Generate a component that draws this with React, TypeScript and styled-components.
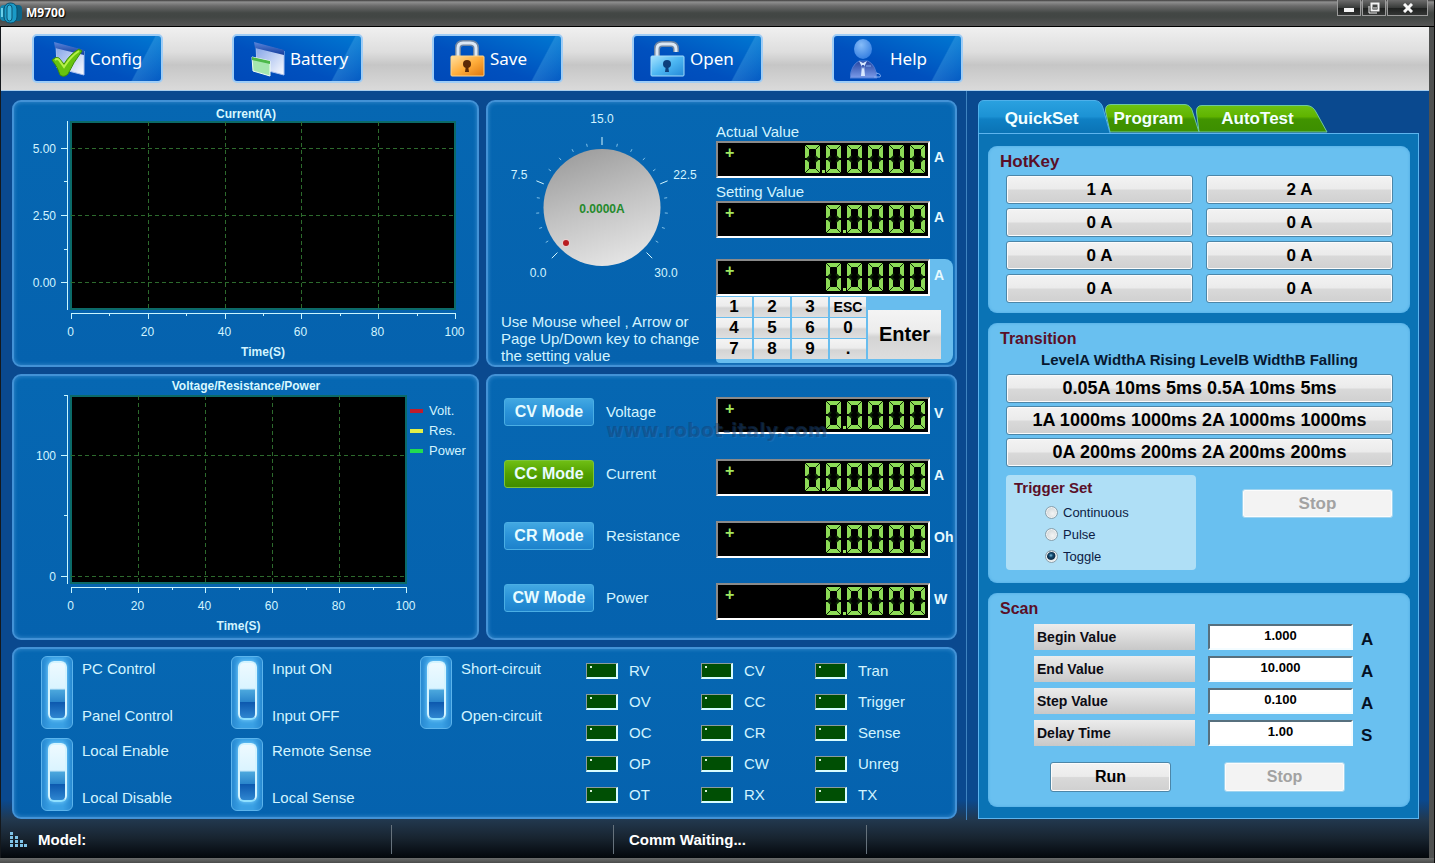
import React, { useState } from 'react';
import styled, { createGlobalStyle, css } from 'styled-components';

const SANS = '"Liberation Sans", Arial, sans-serif';
const UI = '"Noto Sans", "Open Sans", sans-serif';

const GlobalStyle = createGlobalStyle`
  *, *::before, *::after { box-sizing: border-box; }
  body { margin: 0; background: #4b4d4c; font-family: ${SANS}; }
  button, input, output { font-family: inherit; }
  button { cursor: pointer; padding: 0; }
  h1, h2, h3, p { margin: 0; }
`;

/* ---------- window frame ---------- */

const Window = styled.div`
  min-height: 100vh;
  display: flex;
  flex-direction: column;
  background: #4f5150;
  border-right: 1px solid #0a0a0a;
`;

const TitleBar = styled.header`
  display: flex;
  align-items: center;
  height: 27px;
  padding-right: 6px;
  border-bottom: 1px solid #000;
  background: linear-gradient(#3c3a3a 0, #8f8f8f 2px, #6a6a6a 6px, #434745 13px, #424644 17px, #555 26px);
`;

const AppTitle = styled.h1`
  flex: 1;
  margin-left: 4px;
  font: bold 12px/20px ${UI};
  color: #fff;
  text-shadow: 1px 1px 1px #000;
`;

const WindowButtons = styled.div`
  display: flex;
  align-self: flex-start;
  gap: 1px;
`;

const WindowButton = styled.button<{ $wide?: boolean }>`
  width: ${(p) => (p.$wide ? 41 : 24)}px;
  height: 16px;
  display: flex;
  align-items: center;
  justify-content: center;
  border: 1px solid #9b9b9b;
  border-top: 0;
  background: linear-gradient(#6c6c6c, #3a3c3b 50%, #1e201f 52%, #343635);
`;

const Client = styled.div`
  flex: 1;
  display: flex;
  flex-direction: column;
  margin: 0 5px 0 0;
  border-left: 1px solid #14181c;
  background:
    linear-gradient(to top, #03070b 0, #182430 20px, #22384e 38px, rgba(34, 56, 78, 0) 58px),
    #0a498f;
`;

const BottomFrame = styled.div`
  height: 5px;
  padding-left: 14px;
  overflow: hidden;
  background: linear-gradient(#6b6d6c, #4a4c4b);
`;

/* ---------- toolbar ---------- */

const Toolbar = styled.nav`
  display: flex;
  gap: 69px;
  height: 64px;
  padding: 7px 31px;
  border-bottom: 1px solid #a9cdec;
  background: linear-gradient(#f0f0f0, #dedede 25px, #c6c6c6 38px, #dadada);
`;

const ToolButton = styled.button`
  width: 131px;
  height: 49px;
  display: grid;
  grid-template-columns: 36px 1fr;
  align-items: center;
  gap: 4px;
  padding-left: 16px;
  border: 2px solid #9fcdf6;
  border-radius: 5px;
  color: #fff;
  font: 17px/24px ${UI};
  text-align: left;
  background:
    linear-gradient(118deg, rgba(80, 180, 240, 0) 80%, rgba(90, 180, 235, 0.3) 81%, rgba(80, 170, 230, 0.05)),
    linear-gradient(to top right, #0049b8, #0050be 40%, #0078d2);
`;

/* ---------- main layout ---------- */

const Main = styled.main`
  flex: 1;
  display: grid;
  grid-template-columns: minmax(0, 1fr) 463px;
`;

const Bench = styled.section`
  display: grid;
  grid-template-columns: 467fr 471fr;
  grid-template-rows: 267px 266px auto;
  gap: 7px;
  align-content: start;
  padding: 9px 9px 1px 11px;
`;

const Panel = styled.section<{ $span?: boolean }>`
  position: relative;
  min-width: 0;
  border: 2px solid #4392d6;
  border-radius: 9px;
  background: linear-gradient(#0667b2, #0562ae);
  box-shadow: inset 0 0 4px #3d8fd0;
  color: #d2f4ff;
  ${(p) => p.$span && css`grid-column: 1 / -1;`}
`;

const Drawing = styled.svg`
  display: block;
  width: 100%;
  height: auto;
  font-family: ${SANS};
  font-size: 12px;
`;

/* ---------- read-outs ---------- */

const DialPanel = styled(Panel)`
  display: grid;
  grid-template-columns: 228px 1fr;
`;

const DialSide = styled.div`
  display: flex;
  flex-direction: column;
`;

const Hint = styled.p`
  padding-left: 13px;
  font-size: 15px;
  line-height: 17px;
  white-space: pre;
`;

const ValueSide = styled.div`
  display: flex;
  flex-direction: column;
  padding-top: 21px;
`;

const ValueLabel = styled.h3`
  font-size: 15px;
  font-weight: normal;
  line-height: 18px;
`;

const ReadoutRow = styled.div<{ $after: number }>`
  display: flex;
  gap: 4px;
  margin-bottom: ${(p) => p.$after}px;
`;

const Readout = styled.output`
  flex: none;
  display: flex;
  justify-content: space-between;
  width: 214px;
  height: 37px;
  padding: 2px 3px 0 7px;
  border: 2px solid;
  border-color: #8a8a8a #fff #fff #8a8a8a;
  background: #000;
`;

const Plus = styled.span`
  color: #a2e65f;
  font: bold 16px/16px ${SANS};
`;

const Digits = styled.span`
  display: flex;
  gap: 6px;
`;

const Unit = styled.span`
  font-size: 14px;
  font-weight: bold;
  line-height: 32px;
  color: #e6faff;
`;

const Entry = styled.div`
  width: 237px;
  padding-bottom: 4px;
  border-radius: 4px 8px 8px 4px;
  background: #68bdee;
`;

const Keypad = styled.div`
  display: flex;
  align-items: flex-end;
  gap: 2px;
`;

const KeyGrid = styled.div`
  display: grid;
  grid-template-columns: repeat(4, 36px);
  grid-auto-rows: 20px;
  gap: 1px 2px;
`;

const keyFace = css`
  border: 0;
  color: #000;
  background: linear-gradient(#f4f4f4, #ececec 45%, #d4d4d4 55%, #dedede);
  font-weight: bold;
`;

const Key = styled.button<{ $small?: boolean }>`
  ${keyFace}
  font-size: ${(p) => (p.$small ? 14 : 17)}px;
  line-height: 20px;
`;

const EnterKey = styled.button`
  ${keyFace}
  width: 73px;
  height: 49px;
  font-size: 20px;
`;

/* ---------- modes ---------- */

const ModePanel = styled(Panel)`
  display: flex;
  flex-direction: column;
  gap: 25px;
  padding: 21px 0 0 16px;
`;

const ModeRow = styled.div`
  display: grid;
  grid-template-columns: 90px 98px auto 1fr;
  align-items: start;
  column-gap: 12px;
`;

const ModeButton = styled.button<{ $active: boolean }>`
  height: 28px;
  margin-top: 1px;
  border: 1px solid ${(p) => (p.$active ? '#7cc43a' : '#4aaee4')};
  border-radius: 3px;
  color: #e8fcff;
  font-size: 16px;
  font-weight: bold;
  background: ${(p) =>
    p.$active ? 'linear-gradient(#6fbe14, #52a000 50%, #3f8c00)' : 'linear-gradient(#42a8e2, #2a92d8 50%, #1d82cc)'};
`;

const ModeLabel = styled.span`
  font-size: 15px;
  line-height: 30px;
`;

const Watermark = styled.span`
  position: absolute;
  left: 118px;
  top: 42px;
  font: bold 19px/24px "DejaVu Sans", sans-serif;
  color: rgba(20, 60, 110, 0.45);
  text-shadow: 1px 1px 0 rgba(110, 170, 220, 0.12);
  pointer-events: none;
`;

/* ---------- switches and lamps ---------- */

const StatusPanel = styled(Panel)`
  display: grid;
  grid-template-columns: 545fr 369fr;
  padding: 7px 0 6px 27px;
`;

const Switches = styled.div`
  display: grid;
  grid-template-columns: 190fr 189fr 166fr;
  gap: 9px 0;
`;

const SwitchLabel = styled.label`
  display: flex;
  gap: 9px;
  height: 73px;
  font-size: 15px;
  line-height: 18px;
`;

const SwitchBox = styled.input`
  appearance: none;
  position: relative;
  width: 32px;
  height: 73px;
  margin: 0;
  border: 1px solid #5cb4ec;
  border-radius: 6px;
  background: linear-gradient(to right, #2789d2, #3aa0e4 30%, #3aa0e4 70%, #2789d2);

  &::before {
    content: '';
    position: absolute;
    inset: 4px 5px 8px 6px;
    border: 2px solid #d4f4ff;
    border-bottom-color: #8fe0ff;
    border-radius: 6px;
    background: linear-gradient(#eefaff, #daf4ff 46%, #4aa6dc 50%, #2b86cc 70%, #0c58ae 71%, #2f86d0);
    box-shadow: 0 0 4px #7fd4ff;
  }

  &:checked::before { transform: scaleY(-1); }
`;

const SwitchTexts = styled.span`
  display: flex;
  flex-direction: column;
  justify-content: space-between;
  padding: 4px 0;
`;

const Lamps = styled.ul`
  display: grid;
  grid-template-columns: 115fr 114fr 140fr;
  grid-template-rows: repeat(5, 16px);
  grid-auto-flow: column;
  gap: 15px 0;
  margin: 7px 0 0;
  padding: 0;
  list-style: none;
`;

const Lamp = styled.li`
  display: flex;
  align-items: center;
  gap: 11px;
  font-size: 15px;
  line-height: 16px;

  &::before {
    content: '';
    width: 32px;
    height: 16px;
    border: 2px solid;
    border-width: 1px 2px 2px 1px;
    border-color: #8c9c9c #d8fcff #d8fcff #8c9c9c;
    background: radial-gradient(circle at 4px 3px, #d8f0d8 1px, transparent 1px), #004f04;
  }
`;

/* ---------- set-up column ---------- */

const Setup = styled.aside`
  display: flex;
  flex-direction: column;
  padding: 9px 10px 1px 11px;
  border-left: 1px solid #3f84c0;
`;

const Tabs = styled.div`
  display: flex;
  align-items: flex-end;
  height: 33px;
`;

const Tab = styled.button<{ $width: number; $shift?: number; $layer: number }>`
  position: relative;
  z-index: ${(p) => p.$layer};
  width: ${(p) => p.$width}px;
  height: 33px;
  padding: 5px ${(p) => p.$shift || 0}px 0 0;
  border: 0;
  background: none;
  color: #f2ffff;
  font-size: 17px;
  line-height: 28px;
  font-weight: bold;

  svg {
    position: absolute;
    left: 0;
    top: 0;
    z-index: -1;
    overflow: visible;
  }
`;

const TabBody = styled.div`
  flex: 1;
  display: flex;
  flex-direction: column;
  gap: 10px;
  padding: 12px 8px 10px 9px;
  border: 1px solid #5db4ee;
  background: #0a73b5;
`;

const Card = styled.section<{ $bottom: number }>`
  padding: 6px 17px ${(p) => p.$bottom}px 18px;
  border-radius: 9px;
  background: #69c0f0;
  box-shadow: inset 0 0 3px #4ba6e0;
`;

const CardTitle = styled.h2<{ $size?: number }>`
  margin-left: -6px;
  font-size: ${(p) => p.$size || 16}px;
  line-height: 19px;
  color: #5a0f28;
`;

const face = css`
  border: 1px solid #4c86a8;
  border-radius: 3px;
  box-shadow: inset 0 0 0 1px #fcfcfc;
  color: #000;
  font-weight: bold;
  background: linear-gradient(#f3f3f3, #ebebeb 48%, #d9d9d9 52%, #d0d0d0);

  &:disabled {
    border-color: #9fd4f0;
    background: #f3f3f3;
    color: #a2a2a2;
    cursor: default;
  }
`;

const Command = styled.button<{ $size?: number; $height?: number }>`
  ${face}
  width: 100%;
  height: ${(p) => p.$height || 29}px;
  font-size: ${(p) => p.$size || 17}px;
`;

const HotKeys = styled.div`
  display: grid;
  grid-template-columns: 1fr 1fr;
  gap: 4px 13px;
  margin-top: 4px;
`;

const ColumnHeads = styled.p`
  margin-top: 3px;
  text-align: center;
  font-size: 15px;
  font-weight: bold;
  line-height: 18px;
  color: #071830;
`;

const Sequence = styled.div`
  display: grid;
  gap: 3px;
  margin-top: 5px;
`;

const TriggerRow = styled.div`
  display: grid;
  grid-template-columns: 190px 151px;
  justify-content: space-between;
  align-items: start;
  margin-top: 8px;
`;

const TriggerStop = styled.div`
  padding-top: 14px;
`;

const TriggerSet = styled.fieldset`
  margin: 0;
  height: 95px;
  padding: 4px 8px;
  border: 0;
  border-radius: 4px;
  background: #afdff6;
`;

const TriggerTitle = styled.h3`
  margin-bottom: 4px;
  font-size: 15px;
  line-height: 18px;
  color: #5a0f28;
`;

const RadioLabel = styled.label`
  display: flex;
  align-items: center;
  gap: 5px;
  height: 22px;
  padding-left: 31px;
  font-size: 13px;
  color: #0c1c44;
`;

const Radio = styled.input`
  appearance: none;
  width: 13px;
  height: 13px;
  margin: 0;
  border: 1px solid #8aa0ac;
  border-radius: 50%;
  background: radial-gradient(circle at 60% 60%, #f4f4f4, #c4ccd0);
  box-shadow: inset 0 0 0 1px #f2f2f2;

  &:checked {
    background: radial-gradient(circle at 45% 40%, #7fc4e4 0, #14486c 2px, #0c2c48 4px, #e4eaec 5px);
  }
`;

const ScanFields = styled.div`
  display: grid;
  gap: 6px;
  margin: 6px 0 0 28px;
`;

const ScanRow = styled.div`
  display: grid;
  grid-template-columns: 161px 158px 1fr;
  grid-template-rows: 26px;
`;

const ScanLabel = styled.label`
  padding-left: 3px;
  color: #0c0c14;
  font-size: 14px;
  font-weight: bold;
  line-height: 26px;
  background: linear-gradient(#ececec, #dedede 40%, #c8c8c8);
`;

const ScanInput = styled.input`
  width: 145px;
  height: 26px;
  margin-left: 13px;
  padding: 0 0 3px;
  border: 2px solid;
  border-color: #57707e #f4fcff #f4fcff #57707e;
  background: #fff;
  color: #000;
  font-size: 13px;
  font-weight: bold;
  text-align: center;
`;

const ScanUnit = styled.span`
  padding-left: 8px;
  font-size: 17px;
  font-weight: bold;
  line-height: 32px;
  color: #041024;
`;

const ScanActions = styled.div`
  display: grid;
  grid-template-columns: 121px 121px;
  gap: 53px;
  margin: 16px 0 0 44px;
`;

/* ---------- status bar ---------- */

const StatusBar = styled.footer`
  display: grid;
  grid-template-columns: 390fr 222fr 253fr 563fr;
  height: 38px;
  padding: 5px 0 4px;
`;

const StatusCell = styled.div`
  display: flex;
  align-items: center;
  gap: 10px;
  padding-left: 9px;
  font-size: 15px;
  font-weight: bold;
  color: #fff;

  & + & {
    padding-left: 15px;
    border-left: 1px solid #66727c;
  }
`;

/* ---------- drawings ---------- */

const AppIcon = () => (
  <svg width="22" height="22" viewBox="0 0 22 22" aria-hidden="true">
    <rect x="0" y="3" width="9" height="16" rx="4" fill="#1585ad" />
    <rect x="13" y="3" width="9" height="16" rx="4" fill="#0b6488" />
    <rect x="4" y="1" width="13" height="20" rx="6" fill="#1a9ac6" stroke="#0b4e6c" />
    <rect x="7" y="3" width="5" height="16" rx="3" fill="#3bb4da" stroke="#0b5474" />
    <path d="M2 6v9" stroke="#6ad0ea" strokeWidth="2" />
  </svg>
);

const WindowShape = () => (
  <>
    <defs>
      <linearGradient id="pane" x1="0" y1="0" x2="1" y2="1">
        <stop offset="0" stopColor="#7d9fe6" />
        <stop offset="1" stopColor="#fbfcff" />
      </linearGradient>
      <linearGradient id="strip" x1="0" y1="0" x2="0" y2="1">
        <stop offset="0" stopColor="#5b86dc" />
        <stop offset="1" stopColor="#123c9c" />
      </linearGradient>
    </defs>
    <path d="M6 4L34 11V35L7 28Z" fill="url(#pane)" stroke="#a9c0ee" />
    <path d="M4 2L34 10V15L5 8Z" fill="url(#strip)" />
  </>
);

const ConfigIcon = () => (
  <svg width="36" height="38" viewBox="0 0 36 38" aria-hidden="true">
    <WindowShape />
    <path d="M2 20Q6 16 9 18L14 24Q20 14 29 9L32 11Q23 23 18 34Q14 38 10 35Q8 27 2 20Z" fill="#67c30f" stroke="#3c8e06" />
    <path d="M5 20Q7 18 9 20L14 27Q21 16 29 11" fill="none" stroke="#b8f04a" strokeWidth="2" />
  </svg>
);

const BatteryIcon = () => (
  <svg width="36" height="38" viewBox="0 0 36 38" aria-hidden="true">
    <WindowShape />
    <path d="M2 17L20 21V36L3 31Z" fill="#a4e6ae" stroke="#f2fff2" />
    <path d="M2 17L20 21V24L2 20Z" fill="#4cb84a" />
  </svg>
);

const LockIcon = ({ open }: { open?: boolean }) => {
  const id = open ? 'lock-blue' : 'lock-gold';
  const shackle = open ? 'M7 18V9Q7 4 12 4H21Q26 4 26 9V12' : 'M8 18V8Q8 3 13 3H20Q26 3 26 8V18';
  return (
    <svg width="36" height="38" viewBox="0 0 36 38" aria-hidden="true">
      <defs>
        <linearGradient id={id} x1="0" y1="0" x2="1" y2="1">
          <stop offset="0" stopColor={open ? '#a6e4ff' : '#ffe0a0'} />
          <stop offset="0.5" stopColor={open ? '#4cb6f2' : '#ffae3c'} />
          <stop offset="1" stopColor={open ? '#2489d8' : '#e0760c'} />
        </linearGradient>
      </defs>
      <path d={shackle} fill="none" stroke="#6f87a4" strokeWidth="6" />
      <path d={shackle} fill="none" stroke="#dce8f4" strokeWidth="3" />
      <rect x="1" y="16" width="33" height="20" rx="1" fill={`url(#${id})`} stroke={open ? '#a2dcfb' : '#ffd488'} />
      <circle cx="17" cy="24" r="4" fill={open ? '#0d3f7c' : '#5c2a06'} />
      <path d="M16 25H18L19 32H15Z" fill={open ? '#0d3f7c' : '#5c2a06'} />
    </svg>
  );
};

const HelpIcon = () => (
  <svg width="36" height="42" viewBox="0 0 36 42" aria-hidden="true">
    <defs>
      <radialGradient id="head" cx="0.4" cy="0.3" r="0.8">
        <stop offset="0" stopColor="#86bcf8" />
        <stop offset="1" stopColor="#2c78de" />
      </radialGradient>
      <linearGradient id="coat" x1="0" y1="0" x2="0" y2="1">
        <stop offset="0" stopColor="#2444a0" />
        <stop offset="1" stopColor="#7c9cea" />
      </linearGradient>
    </defs>
    <path d="M0 40Q1 27 9 23H18Q26 27 27 40Z" fill="url(#coat)" stroke="#4f7cd4" />
    <ellipse cx="13" cy="11" rx="9" ry="10" fill="url(#head)" />
    <path d="M13 25L9 23L13 31L17 23ZM12 27H14L15 38H11Z" fill="#d8e8ff" />
    <path d="M16 28H21M26 35Q32 36 30 39H24" stroke="#86aef0" fill="none" />
  </svg>
);

/* End points of the seven bars of one LED digit, in a 15 x 28 cell. */
const SEGMENTS: Record<string, number[]> = {
  a: [0, 2, 15, 2],
  b: [13, 3, 13, 13],
  c: [13, 15, 13, 25],
  d: [0, 26, 15, 26],
  e: [2, 15, 2, 25],
  f: [2, 3, 2, 13],
  g: [3, 14, 12, 14],
};

const LIT: Record<string, string> = {
  '0': 'abcdef', '1': 'bc', '2': 'abged', '3': 'abgcd', '4': 'fgbc',
  '5': 'afgcd', '6': 'afgedc', '7': 'abc', '8': 'abcdefg', '9': 'abcdfg',
};

const Digit = ({ value, point }: { value: string; point: boolean }) => (
  <svg width="15" height="28" viewBox="0 0 15 28" overflow="visible">
    {LIT[value].split('').map((name) => {
      const [x1, y1, x2, y2] = SEGMENTS[name];
      return <line key={name} x1={x1} y1={y1} x2={x2} y2={y2} stroke="#8ddb57" strokeWidth="4" />;
    })}
    <g stroke="#0a2404" strokeWidth="1">
      <line x1="0" y1="0" x2="5" y2="5" />
      <line x1="15" y1="0" x2="10" y2="5" />
      <line x1="0" y1="28" x2="5" y2="23" />
      <line x1="15" y1="28" x2="10" y2="23" />
      <line x1="2" y1="14" x2="5" y2="11" strokeWidth="2" />
      <line x1="2" y1="14" x2="5" y2="17" strokeWidth="2" />
      <line x1="13" y1="14" x2="10" y2="11" strokeWidth="2" />
      <line x1="13" y1="14" x2="10" y2="17" strokeWidth="2" />
    </g>
    {point && <rect x="17" y="25" width="3" height="3" fill="#97e05c" />}
  </svg>
);

const Meter = ({ value, unit, label, after = 0 }: { value: string; unit: string; label: string; after?: number }) => {
  const digits = value.split('').filter((c) => c !== '.');
  const pointAfter = value.indexOf('.') - 1;
  return (
    <ReadoutRow $after={after}>
      <Readout aria-label={`${label} +${value} ${unit}`}>
        <Plus>+</Plus>
        <Digits>
          {digits.map((d, i) => (
            <Digit key={i} value={d} point={i === pointAfter} />
          ))}
        </Digits>
      </Readout>
      <Unit>{unit}</Unit>
    </ReadoutRow>
  );
};

type ChartProps = {
  title: string;
  titleY: number;
  right: number;
  majors: { y: number; text: string }[];
  minors: number[];
  legend?: { text: string; color: string }[];
};

const Chart = ({ title, titleY, right, majors, minors, legend = [] }: ChartProps) => {
  const left = 57;
  const top = 20;
  const bottom = 207;
  const at = (v: number) => Math.round(left + ((right - left) * v) / 100) + 0.5;
  return (
    <Drawing viewBox="0 0 463 262" role="img" aria-label={title}>
      <text x="232" y={titleY} textAnchor="middle" fontWeight="bold" fill="#d8f8ff">{title}</text>
      <rect x={left} y={top} width={right - left} height={bottom - top} fill="#000" stroke="#0b6a68" strokeWidth="2" />
      <g stroke="#2d6a2d" strokeDasharray="4 3">
        {[20, 40, 60, 80].map((v) => (
          <line key={v} x1={at(v)} y1={top} x2={at(v)} y2={bottom} />
        ))}
        {majors.map((m) => (
          <line key={m.text} x1={left} y1={m.y + 0.5} x2={right} y2={m.y + 0.5} />
        ))}
      </g>
      <g stroke="#c8f6ff">
        <line x1="53.5" y1={top - 1} x2="53.5" y2={bottom + 1} />
        {majors.map((m) => (
          <line key={m.text} x1="47" y1={m.y + 0.5} x2="53" y2={m.y + 0.5} />
        ))}
        {minors.map((y) => (
          <line key={y} x1="50" y1={y + 0.5} x2="53" y2={y + 0.5} />
        ))}
        <line x1={left} y1="211.5" x2={right + 1} y2="211.5" />
        {[0, 20, 40, 60, 80, 100].map((v) => (
          <line key={v} x1={at(v)} y1="211" x2={at(v)} y2="217" />
        ))}
        {[10, 30, 50, 70, 90].map((v) => (
          <line key={v} x1={at(v)} y1="211" x2={at(v)} y2="214" />
        ))}
      </g>
      <g fill="#d2f4ff">
        {majors.map((m) => (
          <text key={m.text} x="42" y={m.y + 5} textAnchor="end">{m.text}</text>
        ))}
        {[0, 20, 40, 60, 80, 100].map((v) => (
          <text key={v} x={at(v) - 1} y="234" textAnchor="middle">{v}</text>
        ))}
        <text x={(left + right) / 2} y="254" textAnchor="middle" fontWeight="bold">Time(S)</text>
        {legend.map((item, i) => (
          <g key={item.text}>
            <rect x={right + 4} y={33 + i * 20} width="13" height="4" fill={item.color} />
            <text x={right + 23} y={39 + i * 20} fontSize="13">{item.text}</text>
          </g>
        ))}
      </g>
    </Drawing>
  );
};

const Dial = () => {
  const ticks = Array.from({ length: 21 }, (_, i) => i);
  return (
    <Drawing viewBox="-114 -105 228 211" role="img" aria-label="Setting dial">
      <defs>
        <linearGradient id="knob" x1="0.25" y1="0" x2="0.6" y2="1">
          <stop offset="0" stopColor="#9c9c9c" />
          <stop offset="0.5" stopColor="#c2c2c2" />
          <stop offset="1" stopColor="#e4e4e4" />
        </linearGradient>
      </defs>
      {ticks.map((i) => {
        const a = ((-135 + i * 13.5) * Math.PI) / 180;
        const major = i % 5 === 0;
        const r = major ? 71 : 66;
        return (
          <line
            key={i}
            x1={Math.sin(a) * 63}
            y1={1 - Math.cos(a) * 63}
            x2={Math.sin(a) * r}
            y2={1 - Math.cos(a) * r}
            stroke={major ? '#d2f6ff' : '#7fc0e8'}
          />
        );
      })}
      <circle cx="0" cy="0.5" r="58.5" fill="url(#knob)" />
      <circle cx="-36" cy="36" r="4" fill="#e8d0d0" />
      <circle cx="-36" cy="36" r="3" fill="#b81c20" />
      <text y="6" textAnchor="middle" fontWeight="bold" fill="#248a2c">0.0000A</text>
      <g fill="#d2f4ff" textAnchor="middle">
        <text x="0" y="-84">15.0</text>
        <text x="-83" y="-28">7.5</text>
        <text x="83" y="-28">22.5</text>
        <text x="-64" y="70">0.0</text>
        <text x="64" y="70">30.0</text>
      </g>
    </Drawing>
  );
};

const TabShape = ({ d, green }: { d: string; green?: boolean }) => {
  const id = green ? 'tab-green' : 'tab-blue';
  return (
    <svg width="1" height="33" aria-hidden="true">
      <defs>
        <linearGradient id={id} gradientUnits="userSpaceOnUse" x1="0" y1="0" x2="0" y2="33">
          <stop offset="0" stopColor={green ? '#72c81a' : '#2ba2e0'} />
          <stop offset="0.5" stopColor={green ? '#60b400' : '#1c92d4'} />
          <stop offset="0.58" stopColor={green ? '#419400' : '#0f80c4'} />
          <stop offset="1" stopColor={green ? '#3c8e00' : '#0a73b5'} />
        </linearGradient>
      </defs>
      <path d={d} fill={`url(#${id})`} stroke={green ? '#6ec8a0' : '#4eb0ea'} />
    </svg>
  );
};

/* ---------- data ---------- */

const TOOLS = [
  { text: 'Config', icon: <ConfigIcon /> },
  { text: 'Battery', icon: <BatteryIcon /> },
  { text: 'Save', icon: <LockIcon /> },
  { text: 'Open', icon: <LockIcon open /> },
  { text: 'Help', icon: <HelpIcon /> },
];

const KEYS = ['1', '2', '3', 'ESC', '4', '5', '6', '0', '7', '8', '9', '.'];

const MODES = [
  { mode: 'CV Mode', label: 'Voltage', value: '0.0000', unit: 'V' },
  { mode: 'CC Mode', label: 'Current', value: '0.00000', unit: 'A' },
  { mode: 'CR Mode', label: 'Resistance', value: '0.0000', unit: 'Oh' },
  { mode: 'CW Mode', label: 'Power', value: '0.0000', unit: 'W' },
];

const SWITCHES = [
  ['PC Control', 'Panel Control'],
  ['Input ON', 'Input OFF'],
  ['Short-circuit', 'Open-circuit'],
  ['Local Enable', 'Local Disable'],
  ['Remote Sense', 'Local Sense'],
];

const LAMPS = ['RV', 'OV', 'OC', 'OP', 'OT', 'CV', 'CC', 'CR', 'CW', 'RX', 'Tran', 'Trigger', 'Sense', 'Unreg', 'TX'];

const HOTKEYS = ['1 A', '2 A', '0 A', '0 A', '0 A', '0 A', '0 A', '0 A'];

const SEQUENCES = [
  '0.05A 10ms 5ms 0.5A 10ms 5ms',
  '1A 1000ms 1000ms 2A 1000ms 1000ms',
  '0A 200ms 200ms 2A 200ms 200ms',
];

const SCAN = [
  { id: 'begin', label: 'Begin Value', value: '1.000', unit: 'A' },
  { id: 'end', label: 'End Value', value: '10.000', unit: 'A' },
  { id: 'step', label: 'Step Value', value: '0.100', unit: 'A' },
  { id: 'delay', label: 'Delay Time', value: '1.00', unit: 'S' },
];

export default function App() {
  const [mode, setMode] = useState('CC Mode');
  return (
    <Window>
      <GlobalStyle />
      <TitleBar>
        <AppIcon />
        <AppTitle>M9700</AppTitle>
        <WindowButtons>
          <WindowButton aria-label="Minimize">
            <svg width="10" height="10"><rect y="5" width="10" height="4" fill="#f4f4f4" /></svg>
          </WindowButton>
          <WindowButton aria-label="Restore">
            <svg width="12" height="12" fill="none" stroke="#f4f4f4">
              <path d="M1 4V11H9" />
              <rect x="3.5" y="1.5" width="7" height="7" strokeWidth="2" />
              <path d="M5 6H9" />
            </svg>
          </WindowButton>
          <WindowButton $wide aria-label="Close">
            <svg width="10" height="10" stroke="#f8f8f8" strokeWidth="3"><path d="M1 1L9 9M9 1L1 9" /></svg>
          </WindowButton>
        </WindowButtons>
      </TitleBar>

      <Client>
        <Toolbar>
          {TOOLS.map((tool) => (
            <ToolButton key={tool.text}>
              {tool.icon}
              <span>{tool.text}</span>
            </ToolButton>
          ))}
        </Toolbar>

        <Main>
          <Bench>
            <Panel>
              <Chart
                title="Current(A)"
                titleY={16}
                right={441}
                majors={[{ y: 46, text: '5.00' }, { y: 113, text: '2.50' }, { y: 180, text: '0.00' }]}
                minors={[79, 147]}
              />
            </Panel>

            <DialPanel>
              <DialSide>
                <Dial />
                <Hint>{'Use Mouse wheel , Arrow or\nPage Up/Down key to change\nthe setting value'}</Hint>
              </DialSide>
              <ValueSide>
                <ValueLabel>Actual Value</ValueLabel>
                <Meter label="Actual Value" value="0.00000" unit="A" after={5} />
                <ValueLabel>Setting Value</ValueLabel>
                <Meter label="Setting Value" value="0.0000" unit="A" after={21} />
                <Entry>
                  <Meter label="Entry" value="0.0000" unit="A" after={1} />
                  <Keypad>
                    <KeyGrid>
                      {KEYS.map((k) => (
                        <Key key={k} $small={k === 'ESC'}>{k}</Key>
                      ))}
                    </KeyGrid>
                    <EnterKey>Enter</EnterKey>
                  </Keypad>
                </Entry>
              </ValueSide>
            </DialPanel>

            <Panel>
              <Chart
                title="Voltage/Resistance/Power"
                titleY={14}
                right={392}
                majors={[{ y: 79, text: '100' }, { y: 200, text: '0' }]}
                minors={[19, 139]}
                legend={[
                  { text: 'Volt.', color: '#c01c2c' },
                  { text: 'Res.', color: '#e2f048' },
                  { text: 'Power', color: '#22dc50' },
                ]}
              />
            </Panel>

            <ModePanel>
              {MODES.map((m) => (
                <ModeRow key={m.mode}>
                  <ModeButton $active={mode === m.mode} aria-pressed={mode === m.mode} onClick={() => setMode(m.mode)}>
                    {m.mode}
                  </ModeButton>
                  <ModeLabel>{m.label}</ModeLabel>
                  <Meter label={m.label} value={m.value} unit={m.unit} />
                </ModeRow>
              ))}
              <Watermark>www.robot-italy.com</Watermark>
            </ModePanel>

            <StatusPanel $span>
              <Switches>
                {SWITCHES.map(([on, off]) => (
                  <SwitchLabel key={on}>
                    <SwitchBox type="checkbox" />
                    <SwitchTexts>
                      <span>{on}</span>
                      <span>{off}</span>
                    </SwitchTexts>
                  </SwitchLabel>
                ))}
              </Switches>
              <Lamps>
                {LAMPS.map((lamp) => (
                  <Lamp key={lamp}>{lamp}</Lamp>
                ))}
              </Lamps>
            </StatusPanel>
          </Bench>

          <Setup>
            <Tabs role="tablist">
              <Tab role="tab" aria-selected="true" $width={127} $layer={3}>
                <TabShape d="M0.5 33V6Q1 0.5 6 0.5H117Q123 1 125 8L132 33" />
                QuickSet
              </Tab>
              <Tab role="tab" aria-selected="false" $width={91} $shift={4} $layer={2}>
                <TabShape green d="M5 32L0.5 11Q0 4.5 6 4.5H80Q85 5 87 10L94 32Z" />
                Program
              </Tab>
              <Tab role="tab" aria-selected="false" $width={131} $shift={8} $layer={1}>
                <TabShape green d="M3 32L0.5 12Q0 5.5 6 5.5H111Q117 6 120 12L131 32Z" />
                AutoTest
              </Tab>
            </Tabs>
            <TabBody>
              <Card $bottom={10}>
                <CardTitle $size={17}>HotKey</CardTitle>
                <HotKeys>
                  {HOTKEYS.map((text, i) => (
                    <Command key={i}>{text}</Command>
                  ))}
                </HotKeys>
              </Card>

              <Card $bottom={13}>
                <CardTitle>Transition</CardTitle>
                <ColumnHeads>LevelA WidthA Rising LevelB WidthB Falling</ColumnHeads>
                <Sequence>
                  {SEQUENCES.map((text) => (
                    <Command key={text} $size={18}>{text}</Command>
                  ))}
                </Sequence>
                <TriggerRow>
                  <TriggerSet aria-label="Trigger Set">
                    <TriggerTitle>Trigger Set</TriggerTitle>
                    {['Continuous', 'Pulse', 'Toggle'].map((t) => (
                      <RadioLabel key={t}>
                        <Radio type="radio" name="trigger" defaultChecked={t === 'Toggle'} />
                        {t}
                      </RadioLabel>
                    ))}
                  </TriggerSet>
                  <TriggerStop>
                    <Command disabled>Stop</Command>
                  </TriggerStop>
                </TriggerRow>
              </Card>

              <Card $bottom={15}>
                <CardTitle>Scan</CardTitle>
                <ScanFields>
                  {SCAN.map((f) => (
                    <ScanRow key={f.id}>
                      <ScanLabel htmlFor={f.id}>{f.label}</ScanLabel>
                      <ScanInput id={f.id} defaultValue={f.value} />
                      <ScanUnit>{f.unit}</ScanUnit>
                    </ScanRow>
                  ))}
                </ScanFields>
                <ScanActions>
                  <Command $size={16} $height={30}>Run</Command>
                  <Command $size={16} $height={30} disabled>Stop</Command>
                </ScanActions>
              </Card>
            </TabBody>
          </Setup>
        </Main>

        <StatusBar>
          <StatusCell>
            <svg width="18" height="15" viewBox="0 0 18 15" fill="#7fc4e8" aria-hidden="true">
              {[[0, 4], [5, 3], [10, 2], [14, 1]].map(([x, n]) =>
                Array.from({ length: n }, (_, i) => <rect key={`${x}-${i}`} x={x} y={12 - i * 4} width="3" height="3" />),
              )}
            </svg>
            Model:
          </StatusCell>
          <StatusCell />
          <StatusCell>Comm Waiting...</StatusCell>
          <StatusCell />
        </StatusBar>
      </Client>
      <BottomFrame>
        <svg width="34" height="5" aria-hidden="true">
          <ellipse cx="17" cy="17" rx="20" ry="16" fill="#b9c8d8" stroke="#eef4fa" />
        </svg>
      </BottomFrame>
    </Window>
  );
}
